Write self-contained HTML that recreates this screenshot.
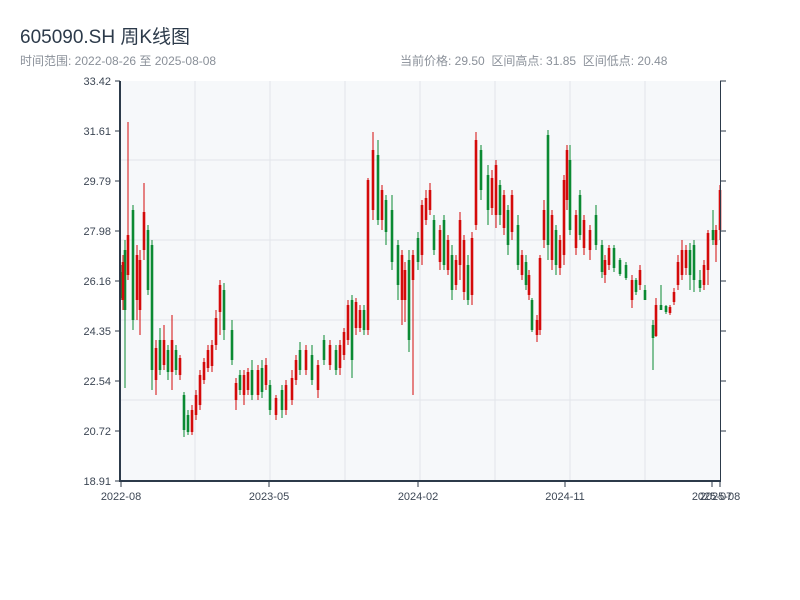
<!DOCTYPE html>
<html><head><meta charset="utf-8"><style>
body{margin:0;width:800px;height:600px;background:#fff;overflow:hidden;font-family:"Liberation Sans","Noto Sans CJK SC",sans-serif}
.t{position:absolute;left:20px;top:22px;font-size:19px;color:#2c3a4a}
.s{position:absolute;top:52px;font-size:12px;color:#8a9099}
svg{position:absolute;left:0;top:0}
.r line{stroke:#d40a0a}.g line{stroke:#0b8a33}
line.w{stroke-width:1}line.b{stroke-width:2.6}
</style></head><body>
<div class="t">605090.SH 周K线图</div>
<div class="s" style="left:20px">时间范围: 2022-08-26 至 2025-08-08</div>
<div class="s" style="left:400px">当前价格: 29.50 &nbsp;区间高点: 31.85 &nbsp;区间低点: 20.48</div>
<svg width="800" height="600" font-family="Liberation Sans, sans-serif" font-size="11">
<rect x="120" y="81" width="600" height="400" fill="#f6f8fa"/>
<g stroke="#e2e5ea">
<line x1="195" y1="81" x2="195" y2="481"/><line x1="270" y1="81" x2="270" y2="481"/><line x1="345" y1="81" x2="345" y2="481"/><line x1="420" y1="81" x2="420" y2="481"/><line x1="495" y1="81" x2="495" y2="481"/><line x1="570" y1="81" x2="570" y2="481"/><line x1="645" y1="81" x2="645" y2="481"/>
<line x1="120" y1="160" x2="720" y2="160"/><line x1="120" y1="240" x2="720" y2="240"/><line x1="120" y1="320" x2="720" y2="320"/><line x1="120" y1="400" x2="720" y2="400"/>
</g>
<g class="g">
<line class="w" x1="121" y1="265" x2="121" y2="300"/><line class="b" x1="121" y1="272" x2="121" y2="298"/>
<line class="w" x1="125" y1="240" x2="125" y2="388"/><line class="b" x1="125" y1="250" x2="125" y2="310"/>
<line class="w" x1="133" y1="205" x2="133" y2="330"/><line class="b" x1="133" y1="210" x2="133" y2="320"/>
<line class="w" x1="148" y1="225" x2="148" y2="295"/><line class="b" x1="148" y1="230" x2="148" y2="290"/>
<line class="w" x1="152" y1="240" x2="152" y2="390"/><line class="b" x1="152" y1="245" x2="152" y2="370"/>
<line class="w" x1="160" y1="328" x2="160" y2="375"/><line class="b" x1="160" y1="340" x2="160" y2="370"/>
<line class="w" x1="168" y1="345" x2="168" y2="380"/><line class="b" x1="168" y1="350" x2="168" y2="372"/>
<line class="w" x1="176" y1="345" x2="176" y2="375"/><line class="b" x1="176" y1="350" x2="176" y2="370"/>
<line class="w" x1="184" y1="392" x2="184" y2="437"/><line class="b" x1="184" y1="395" x2="184" y2="430"/>
<line class="w" x1="188" y1="410" x2="188" y2="435"/><line class="b" x1="188" y1="415" x2="188" y2="432"/>
<line class="w" x1="224" y1="283" x2="224" y2="340"/><line class="b" x1="224" y1="290" x2="224" y2="330"/>
<line class="w" x1="232" y1="320" x2="232" y2="365"/><line class="b" x1="232" y1="330" x2="232" y2="360"/>
<line class="w" x1="240" y1="370" x2="240" y2="395"/><line class="b" x1="240" y1="375" x2="240" y2="390"/>
<line class="w" x1="252" y1="360" x2="252" y2="400"/><line class="b" x1="252" y1="370" x2="252" y2="395"/>
<line class="w" x1="262" y1="360" x2="262" y2="398"/><line class="b" x1="262" y1="368" x2="262" y2="392"/>
<line class="w" x1="270" y1="380" x2="270" y2="415"/><line class="b" x1="270" y1="385" x2="270" y2="410"/>
<line class="w" x1="282" y1="385" x2="282" y2="418"/><line class="b" x1="282" y1="390" x2="282" y2="410"/>
<line class="w" x1="300" y1="342" x2="300" y2="375"/><line class="b" x1="300" y1="350" x2="300" y2="370"/>
<line class="w" x1="312" y1="345" x2="312" y2="385"/><line class="b" x1="312" y1="355" x2="312" y2="380"/>
<line class="w" x1="324" y1="335" x2="324" y2="365"/><line class="b" x1="324" y1="340" x2="324" y2="360"/>
<line class="w" x1="336" y1="345" x2="336" y2="375"/><line class="b" x1="336" y1="350" x2="336" y2="370"/>
<line class="w" x1="352" y1="295" x2="352" y2="378"/><line class="b" x1="352" y1="300" x2="352" y2="360"/>
<line class="w" x1="364" y1="305" x2="364" y2="335"/><line class="b" x1="364" y1="310" x2="364" y2="330"/>
<line class="w" x1="378" y1="140" x2="378" y2="225"/><line class="b" x1="378" y1="155" x2="378" y2="220"/>
<line class="w" x1="386" y1="195" x2="386" y2="245"/><line class="b" x1="386" y1="200" x2="386" y2="232"/>
<line class="w" x1="392" y1="195" x2="392" y2="270"/><line class="b" x1="392" y1="210" x2="392" y2="262"/>
<line class="w" x1="398" y1="240" x2="398" y2="300"/><line class="b" x1="398" y1="245" x2="398" y2="285"/>
<line class="w" x1="409" y1="250" x2="409" y2="352"/><line class="b" x1="409" y1="260" x2="409" y2="340"/>
<line class="w" x1="418" y1="232" x2="418" y2="270"/><line class="b" x1="418" y1="238" x2="418" y2="262"/>
<line class="w" x1="434" y1="215" x2="434" y2="255"/><line class="b" x1="434" y1="220" x2="434" y2="250"/>
<line class="w" x1="444" y1="215" x2="444" y2="270"/><line class="b" x1="444" y1="220" x2="444" y2="265"/>
<line class="w" x1="452" y1="245" x2="452" y2="300"/><line class="b" x1="452" y1="255" x2="452" y2="290"/>
<line class="w" x1="468" y1="255" x2="468" y2="305"/><line class="b" x1="468" y1="265" x2="468" y2="300"/>
<line class="w" x1="481" y1="145" x2="481" y2="200"/><line class="b" x1="481" y1="150" x2="481" y2="190"/>
<line class="w" x1="488" y1="165" x2="488" y2="225"/><line class="b" x1="488" y1="175" x2="488" y2="210"/>
<line class="w" x1="500" y1="180" x2="500" y2="225"/><line class="b" x1="500" y1="185" x2="500" y2="215"/>
<line class="w" x1="508" y1="205" x2="508" y2="255"/><line class="b" x1="508" y1="210" x2="508" y2="245"/>
<line class="w" x1="518" y1="215" x2="518" y2="270"/><line class="b" x1="518" y1="225" x2="518" y2="265"/>
<line class="w" x1="526" y1="255" x2="526" y2="290"/><line class="b" x1="526" y1="262" x2="526" y2="285"/>
<line class="w" x1="532" y1="298" x2="532" y2="332"/><line class="b" x1="532" y1="300" x2="532" y2="330"/>
<line class="w" x1="548" y1="130" x2="548" y2="260"/><line class="b" x1="548" y1="135" x2="548" y2="245"/>
<line class="w" x1="556" y1="225" x2="556" y2="275"/><line class="b" x1="556" y1="230" x2="556" y2="265"/>
<line class="w" x1="570" y1="145" x2="570" y2="235"/><line class="b" x1="570" y1="160" x2="570" y2="230"/>
<line class="w" x1="580" y1="190" x2="580" y2="240"/><line class="b" x1="580" y1="195" x2="580" y2="235"/>
<line class="w" x1="596" y1="205" x2="596" y2="250"/><line class="b" x1="596" y1="215" x2="596" y2="245"/>
<line class="w" x1="602" y1="240" x2="602" y2="278"/><line class="b" x1="602" y1="245" x2="602" y2="272"/>
<line class="w" x1="614" y1="245" x2="614" y2="272"/><line class="b" x1="614" y1="248" x2="614" y2="268"/>
<line class="w" x1="620" y1="258" x2="620" y2="276"/><line class="b" x1="620" y1="260" x2="620" y2="274"/>
<line class="w" x1="626" y1="262" x2="626" y2="280"/><line class="b" x1="626" y1="265" x2="626" y2="278"/>
<line class="w" x1="636" y1="278" x2="636" y2="295"/><line class="b" x1="636" y1="280" x2="636" y2="292"/>
<line class="w" x1="645" y1="285" x2="645" y2="300"/><line class="b" x1="645" y1="290" x2="645" y2="300"/>
<line class="w" x1="653" y1="320" x2="653" y2="370"/><line class="b" x1="653" y1="325" x2="653" y2="338"/>
<line class="w" x1="661" y1="285" x2="661" y2="310"/><line class="b" x1="661" y1="305" x2="661" y2="310"/>
<line class="w" x1="666" y1="305" x2="666" y2="314"/><line class="b" x1="666" y1="306" x2="666" y2="312"/>
<line class="w" x1="690" y1="243" x2="690" y2="290"/><line class="b" x1="690" y1="250" x2="690" y2="275"/>
<line class="w" x1="694" y1="240" x2="694" y2="292"/><line class="b" x1="694" y1="245" x2="694" y2="280"/>
<line class="w" x1="700" y1="270" x2="700" y2="292"/><line class="b" x1="700" y1="280" x2="700" y2="288"/>
<line class="w" x1="713" y1="210" x2="713" y2="245"/><line class="b" x1="713" y1="230" x2="713" y2="240"/>
</g>
<g class="r">
<line class="w" x1="123" y1="255" x2="123" y2="310"/><line class="b" x1="123" y1="262" x2="123" y2="300"/>
<line class="w" x1="128" y1="122" x2="128" y2="280"/><line class="b" x1="128" y1="235" x2="128" y2="275"/>
<line class="w" x1="137" y1="245" x2="137" y2="320"/><line class="b" x1="137" y1="255" x2="137" y2="300"/>
<line class="w" x1="140" y1="250" x2="140" y2="335"/><line class="b" x1="140" y1="260" x2="140" y2="310"/>
<line class="w" x1="144" y1="183" x2="144" y2="260"/><line class="b" x1="144" y1="212" x2="144" y2="250"/>
<line class="w" x1="156" y1="340" x2="156" y2="395"/><line class="b" x1="156" y1="348" x2="156" y2="380"/>
<line class="w" x1="164" y1="325" x2="164" y2="370"/><line class="b" x1="164" y1="340" x2="164" y2="365"/>
<line class="w" x1="172" y1="315" x2="172" y2="390"/><line class="b" x1="172" y1="340" x2="172" y2="372"/>
<line class="w" x1="180" y1="355" x2="180" y2="380"/><line class="b" x1="180" y1="358" x2="180" y2="375"/>
<line class="w" x1="192" y1="405" x2="192" y2="435"/><line class="b" x1="192" y1="410" x2="192" y2="432"/>
<line class="w" x1="196" y1="390" x2="196" y2="420"/><line class="b" x1="196" y1="395" x2="196" y2="415"/>
<line class="w" x1="200" y1="370" x2="200" y2="410"/><line class="b" x1="200" y1="375" x2="200" y2="405"/>
<line class="w" x1="204" y1="358" x2="204" y2="384"/><line class="b" x1="204" y1="362" x2="204" y2="380"/>
<line class="w" x1="208" y1="345" x2="208" y2="372"/><line class="b" x1="208" y1="350" x2="208" y2="368"/>
<line class="w" x1="212" y1="340" x2="212" y2="372"/><line class="b" x1="212" y1="345" x2="212" y2="366"/>
<line class="w" x1="216" y1="310" x2="216" y2="350"/><line class="b" x1="216" y1="318" x2="216" y2="345"/>
<line class="w" x1="220" y1="280" x2="220" y2="335"/><line class="b" x1="220" y1="285" x2="220" y2="312"/>
<line class="w" x1="236" y1="378" x2="236" y2="410"/><line class="b" x1="236" y1="383" x2="236" y2="400"/>
<line class="w" x1="244" y1="370" x2="244" y2="405"/><line class="b" x1="244" y1="375" x2="244" y2="395"/>
<line class="w" x1="248" y1="368" x2="248" y2="395"/><line class="b" x1="248" y1="372" x2="248" y2="390"/>
<line class="w" x1="258" y1="365" x2="258" y2="400"/><line class="b" x1="258" y1="370" x2="258" y2="395"/>
<line class="w" x1="266" y1="358" x2="266" y2="390"/><line class="b" x1="266" y1="365" x2="266" y2="385"/>
<line class="w" x1="276" y1="395" x2="276" y2="420"/><line class="b" x1="276" y1="398" x2="276" y2="415"/>
<line class="w" x1="286" y1="380" x2="286" y2="415"/><line class="b" x1="286" y1="385" x2="286" y2="410"/>
<line class="w" x1="292" y1="370" x2="292" y2="405"/><line class="b" x1="292" y1="378" x2="292" y2="400"/>
<line class="w" x1="296" y1="355" x2="296" y2="385"/><line class="b" x1="296" y1="360" x2="296" y2="380"/>
<line class="w" x1="306" y1="345" x2="306" y2="375"/><line class="b" x1="306" y1="350" x2="306" y2="370"/>
<line class="w" x1="318" y1="360" x2="318" y2="398"/><line class="b" x1="318" y1="365" x2="318" y2="390"/>
<line class="w" x1="330" y1="340" x2="330" y2="370"/><line class="b" x1="330" y1="345" x2="330" y2="365"/>
<line class="w" x1="340" y1="340" x2="340" y2="375"/><line class="b" x1="340" y1="345" x2="340" y2="368"/>
<line class="w" x1="344" y1="328" x2="344" y2="360"/><line class="b" x1="344" y1="332" x2="344" y2="355"/>
<line class="w" x1="348" y1="300" x2="348" y2="345"/><line class="b" x1="348" y1="305" x2="348" y2="340"/>
<line class="w" x1="356" y1="298" x2="356" y2="335"/><line class="b" x1="356" y1="302" x2="356" y2="328"/>
<line class="w" x1="360" y1="305" x2="360" y2="332"/><line class="b" x1="360" y1="310" x2="360" y2="328"/>
<line class="w" x1="368" y1="178" x2="368" y2="335"/><line class="b" x1="368" y1="180" x2="368" y2="330"/>
<line class="w" x1="373" y1="132" x2="373" y2="220"/><line class="b" x1="373" y1="150" x2="373" y2="210"/>
<line class="w" x1="382" y1="185" x2="382" y2="230"/><line class="b" x1="382" y1="190" x2="382" y2="220"/>
<line class="w" x1="402" y1="250" x2="402" y2="325"/><line class="b" x1="402" y1="255" x2="402" y2="300"/>
<line class="w" x1="405" y1="262" x2="405" y2="322"/><line class="b" x1="405" y1="270" x2="405" y2="300"/>
<line class="w" x1="413" y1="250" x2="413" y2="395"/><line class="b" x1="413" y1="255" x2="413" y2="280"/>
<line class="w" x1="422" y1="200" x2="422" y2="265"/><line class="b" x1="422" y1="205" x2="422" y2="255"/>
<line class="w" x1="426" y1="190" x2="426" y2="225"/><line class="b" x1="426" y1="198" x2="426" y2="220"/>
<line class="w" x1="430" y1="183" x2="430" y2="215"/><line class="b" x1="430" y1="190" x2="430" y2="210"/>
<line class="w" x1="440" y1="225" x2="440" y2="270"/><line class="b" x1="440" y1="230" x2="440" y2="262"/>
<line class="w" x1="448" y1="235" x2="448" y2="275"/><line class="b" x1="448" y1="240" x2="448" y2="270"/>
<line class="w" x1="456" y1="255" x2="456" y2="290"/><line class="b" x1="456" y1="260" x2="456" y2="285"/>
<line class="w" x1="460" y1="212" x2="460" y2="280"/><line class="b" x1="460" y1="220" x2="460" y2="265"/>
<line class="w" x1="464" y1="235" x2="464" y2="300"/><line class="b" x1="464" y1="240" x2="464" y2="292"/>
<line class="w" x1="472" y1="232" x2="472" y2="305"/><line class="b" x1="472" y1="238" x2="472" y2="295"/>
<line class="w" x1="476" y1="132" x2="476" y2="230"/><line class="b" x1="476" y1="140" x2="476" y2="225"/>
<line class="w" x1="492" y1="170" x2="492" y2="215"/><line class="b" x1="492" y1="178" x2="492" y2="208"/>
<line class="w" x1="496" y1="160" x2="496" y2="228"/><line class="b" x1="496" y1="165" x2="496" y2="215"/>
<line class="w" x1="504" y1="190" x2="504" y2="235"/><line class="b" x1="504" y1="195" x2="504" y2="228"/>
<line class="w" x1="512" y1="190" x2="512" y2="240"/><line class="b" x1="512" y1="195" x2="512" y2="232"/>
<line class="w" x1="522" y1="250" x2="522" y2="280"/><line class="b" x1="522" y1="255" x2="522" y2="275"/>
<line class="w" x1="529" y1="270" x2="529" y2="300"/><line class="b" x1="529" y1="275" x2="529" y2="295"/>
<line class="w" x1="537" y1="315" x2="537" y2="342"/><line class="b" x1="537" y1="320" x2="537" y2="335"/>
<line class="w" x1="540" y1="255" x2="540" y2="335"/><line class="b" x1="540" y1="258" x2="540" y2="330"/>
<line class="w" x1="544" y1="200" x2="544" y2="248"/><line class="b" x1="544" y1="210" x2="544" y2="240"/>
<line class="w" x1="552" y1="210" x2="552" y2="270"/><line class="b" x1="552" y1="215" x2="552" y2="260"/>
<line class="w" x1="560" y1="235" x2="560" y2="275"/><line class="b" x1="560" y1="240" x2="560" y2="268"/>
<line class="w" x1="564" y1="175" x2="564" y2="265"/><line class="b" x1="564" y1="180" x2="564" y2="255"/>
<line class="w" x1="567" y1="145" x2="567" y2="210"/><line class="b" x1="567" y1="150" x2="567" y2="200"/>
<line class="w" x1="576" y1="210" x2="576" y2="255"/><line class="b" x1="576" y1="215" x2="576" y2="248"/>
<line class="w" x1="584" y1="215" x2="584" y2="255"/><line class="b" x1="584" y1="220" x2="584" y2="248"/>
<line class="w" x1="590" y1="225" x2="590" y2="260"/><line class="b" x1="590" y1="230" x2="590" y2="250"/>
<line class="w" x1="605" y1="255" x2="605" y2="283"/><line class="b" x1="605" y1="260" x2="605" y2="275"/>
<line class="w" x1="609" y1="245" x2="609" y2="270"/><line class="b" x1="609" y1="248" x2="609" y2="265"/>
<line class="w" x1="632" y1="275" x2="632" y2="308"/><line class="b" x1="632" y1="280" x2="632" y2="300"/>
<line class="w" x1="640" y1="265" x2="640" y2="290"/><line class="b" x1="640" y1="270" x2="640" y2="285"/>
<line class="w" x1="656" y1="298" x2="656" y2="337"/><line class="b" x1="656" y1="305" x2="656" y2="336"/>
<line class="w" x1="670" y1="305" x2="670" y2="315"/><line class="b" x1="670" y1="307" x2="670" y2="313"/>
<line class="w" x1="674" y1="288" x2="674" y2="305"/><line class="b" x1="674" y1="292" x2="674" y2="302"/>
<line class="w" x1="678" y1="255" x2="678" y2="290"/><line class="b" x1="678" y1="262" x2="678" y2="285"/>
<line class="w" x1="682" y1="240" x2="682" y2="280"/><line class="b" x1="682" y1="250" x2="682" y2="275"/>
<line class="w" x1="686" y1="245" x2="686" y2="275"/><line class="b" x1="686" y1="250" x2="686" y2="268"/>
<line class="w" x1="704" y1="260" x2="704" y2="290"/><line class="b" x1="704" y1="265" x2="704" y2="285"/>
<line class="w" x1="708" y1="230" x2="708" y2="285"/><line class="b" x1="708" y1="233" x2="708" y2="270"/>
<line class="w" x1="716" y1="225" x2="716" y2="262"/><line class="b" x1="716" y1="230" x2="716" y2="245"/>
<line class="w" x1="720" y1="185" x2="720" y2="240"/><line class="b" x1="720" y1="190" x2="720" y2="230"/>
</g>
<line x1="120" y1="81" x2="120" y2="482" stroke="#2c3a4a" stroke-width="2"/>
<line x1="119" y1="481" x2="721" y2="481" stroke="#2c3a4a" stroke-width="2"/>
<line x1="720.5" y1="81" x2="720.5" y2="482" stroke="#2c3a4a"/>
<g stroke="#2c3a4a">
<line x1="115" y1="81" x2="120" y2="81"/><line x1="115" y1="131" x2="120" y2="131"/><line x1="115" y1="181" x2="120" y2="181"/><line x1="115" y1="231" x2="120" y2="231"/><line x1="115" y1="281" x2="120" y2="281"/><line x1="115" y1="331" x2="120" y2="331"/><line x1="115" y1="381" x2="120" y2="381"/><line x1="115" y1="431" x2="120" y2="431"/><line x1="115" y1="481" x2="120" y2="481"/>
<line x1="720" y1="81" x2="726" y2="81"/><line x1="720" y1="131" x2="726" y2="131"/><line x1="720" y1="181" x2="726" y2="181"/><line x1="720" y1="231" x2="726" y2="231"/><line x1="720" y1="281" x2="726" y2="281"/><line x1="720" y1="331" x2="726" y2="331"/><line x1="720" y1="381" x2="726" y2="381"/><line x1="720" y1="431" x2="726" y2="431"/>
<line x1="121" y1="481" x2="121" y2="487"/><line x1="269" y1="481" x2="269" y2="487"/><line x1="418" y1="481" x2="418" y2="487"/><line x1="565" y1="481" x2="565" y2="487"/><line x1="712" y1="481" x2="712" y2="487"/><line x1="720" y1="481" x2="720" y2="487"/>
</g>
<g fill="#3c4654" text-anchor="end">
<text x="111" y="85">33.42</text><text x="111" y="135">31.61</text><text x="111" y="185">29.79</text><text x="111" y="235">27.98</text><text x="111" y="285">26.16</text><text x="111" y="335">24.35</text><text x="111" y="385">22.54</text><text x="111" y="435">20.72</text><text x="111" y="485">18.91</text>
</g>
<g fill="#3c4654" text-anchor="middle">
<text x="121" y="500">2022-08</text><text x="269" y="500">2023-05</text><text x="418" y="500">2024-02</text><text x="565" y="500">2024-11</text><text x="712" y="500">2025-07</text><text x="720" y="500">2025-08</text>
</g>
</svg>
</body></html>
